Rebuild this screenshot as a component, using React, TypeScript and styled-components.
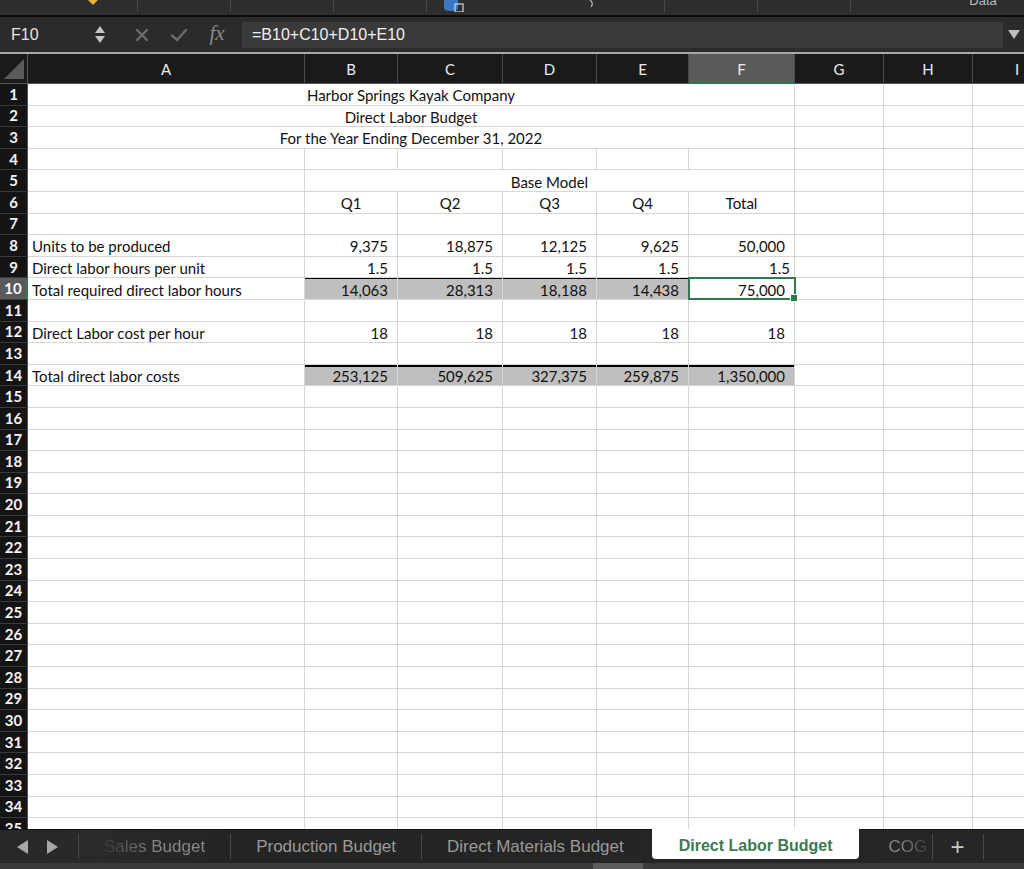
import React from 'react';
import styled, { createGlobalStyle, css } from 'styled-components';

const GlobalStyle = createGlobalStyle`
  html, body {
    margin: 0;
    padding: 0;
    background: #1e1e1e;
    overflow: hidden;
  }
  * {
    box-sizing: border-box;
  }
`;

const CELL_FONT = `Lato, "Open Sans", sans-serif`;
const UI_FONT = `"Liberation Sans", Arial, sans-serif`;
const GREEN = '#2f7a4a';

const COLUMNS = ['A', 'B', 'C', 'D', 'E', 'F', 'G', 'H', 'I', 'J'];
const WIDTHS = [277, 93, 105, 94, 92, 106, 89, 89, 89, 89];

type Align = 'left' | 'center' | 'right';

type Cell = {
  text?: string;
  align?: Align;
  span?: number;
  fill?: boolean;
  rule?: number;
  pad?: number;
  selected?: boolean;
};

const numbers = (values: string[], extra: Partial<Cell> = {}): Cell[] =>
  values.map((text) => ({ text, align: 'right', ...extra }));

const blankRest = (used: number): Cell[] =>
  Array.from({ length: COLUMNS.length - used }, () => ({}));

function buildRow(n: number): Cell[] {
  switch (n) {
    case 1:
      return [{ text: 'Harbor Springs Kayak Company', align: 'center', span: 6 }, ...blankRest(6)];
    case 2:
      return [{ text: 'Direct Labor Budget', align: 'center', span: 6 }, ...blankRest(6)];
    case 3:
      return [{ text: 'For the Year Ending December 31, 2022', align: 'center', span: 6 }, ...blankRest(6)];
    case 5:
      return [{}, { text: 'Base Model', align: 'center', span: 5 }, ...blankRest(6)];
    case 6:
      return [
        {},
        ...['Q1', 'Q2', 'Q3', 'Q4', 'Total'].map((text) => ({ text, align: 'center' as Align })),
        ...blankRest(6),
      ];
    case 8:
      return [
        { text: 'Units to be produced' },
        ...numbers(['9,375', '18,875', '12,125', '9,625', '50,000']),
        ...blankRest(6),
      ];
    case 9:
      return [
        { text: 'Direct labor hours per unit' },
        ...numbers(['1.5', '1.5', '1.5', '1.5']),
        { text: '1.5', align: 'right', pad: 4 },
        ...blankRest(6),
      ];
    case 10:
      return [
        { text: 'Total required direct labor hours' },
        ...numbers(['14,063', '28,313', '18,188', '14,438'], { fill: true, rule: 1 }),
        { text: '75,000', align: 'right', rule: 1, selected: true },
        ...blankRest(6),
      ];
    case 12:
      return [
        { text: 'Direct Labor cost per hour' },
        ...numbers(['18', '18', '18', '18', '18']),
        ...blankRest(6),
      ];
    case 14:
      return [
        { text: 'Total direct labor costs' },
        ...numbers(['253,125', '509,625', '327,375', '259,875', '1,350,000'], { fill: true, rule: 2 }),
        ...blankRest(6),
      ];
    default:
      return blankRest(0);
  }
}

const ROWS = Array.from({ length: 35 }, (_, i) => i + 1);

/* ---------- window chrome ---------- */

const Window = styled.div`
  width: 1024px;
  height: 869px;
  display: flex;
  flex-direction: column;
  background: #1e1e1e;
  overflow: hidden;
`;

const RibbonStrip = styled.div`
  height: 15px;
  flex-shrink: 0;
  background: #2e2e2e;
  display: flex;
  align-items: flex-start;
  overflow: hidden;
  border-bottom: 2px solid #0c0c0c;
  box-sizing: content-box;
`;

const RibbonGroup = styled.div<{ $w: number; $sep?: boolean }>`
  width: ${({ $w }) => $w}px;
  height: 12px;
  flex-shrink: 0;
  position: relative;
  display: flex;
  justify-content: center;
  border-right: ${({ $sep }) => ($sep ? '1px solid #4a4a4a' : 'none')};
`;

const RibbonLabel = styled.span`
  font-family: ${UI_FONT};
  font-size: 13px;
  color: #bdbdbd;
  margin-top: -7px;
  line-height: 16px;
`;

const FormulaBar = styled.div`
  height: 35px;
  flex-shrink: 0;
  background: #2b2b2b;
  display: flex;
  align-items: center;
  border-bottom: 2px solid #a8a8a8;
  box-sizing: content-box;
`;

const NameBox = styled.div`
  width: 124px;
  height: 100%;
  display: flex;
  align-items: center;
  justify-content: space-between;
  padding: 0 19px 0 11px;
  font-family: ${UI_FONT};
  font-size: 16px;
  color: #e4e4e4;
`;

const Stepper = styled.div`
  display: flex;
  flex-direction: column;
  gap: 3px;
`;

const ActionIcon = styled.span<{ $w: number }>`
  width: ${({ $w }) => $w}px;
  display: flex;
  justify-content: center;
  align-items: center;
`;

const FxMark = styled.span`
  width: 38px;
  text-align: center;
  font-family: "Liberation Serif", "DejaVu Serif", serif;
  font-style: italic;
  font-size: 21px;
  color: #8a8a8a;
  margin-top: -3px;
`;

const FormulaInput = styled.div`
  flex: 1;
  height: 26px;
  margin-left: 6px;
  background: #3a3a3a;
  display: flex;
  align-items: center;
  padding-left: 10px;
  font-family: ${UI_FONT};
  font-size: 16px;
  color: #f0f0f0;
`;

const Expander = styled.span`
  width: 21px;
  display: flex;
  justify-content: center;
`;

/* ---------- grid ---------- */

const SheetArea = styled.div`
  flex: 1;
  overflow: hidden;
  background: #ffffff;
`;

const Grid = styled.div`
  display: grid;
  grid-template-columns: 28px ${WIDTHS.map((w) => `${w}px`).join(' ')};
  grid-template-rows: 30px;
  grid-auto-rows: 21.6px;
  width: max-content;
`;

const Corner = styled.div`
  background: #1a1a1a;
  border-right: 1px solid #555;
  border-bottom: 1px solid #555;
  display: flex;
  align-items: flex-end;
  justify-content: flex-end;
  padding: 0 3px 4px 0;
`;

const ColumnHead = styled.div<{ $active?: boolean }>`
  background: ${({ $active }) => ($active ? '#5a5a5a' : '#1a1a1a')};
  border-right: 1px solid #4a4a4a;
  border-bottom: ${({ $active }) => ($active ? `2px solid ${GREEN}` : '1px solid #555')};
  color: #ececec;
  font-family: ${CELL_FONT};
  font-size: 15px;
  display: flex;
  align-items: center;
  justify-content: center;
  padding-top: 1px;
`;

const RowHead = styled.div<{ $active?: boolean }>`
  background: ${({ $active }) => ($active ? '#5a5a5a' : '#141414')};
  border-bottom: 1px solid #3a3a3a;
  border-right: ${({ $active }) => ($active ? `2px solid ${GREEN}` : '1px solid #555')};
  color: #f4f4f4;
  font-family: ${CELL_FONT};
  font-size: 15px;
  font-weight: 700;
  display: flex;
  align-items: center;
  justify-content: center;
  line-height: 1;
  overflow: hidden;
`;

const SheetCell = styled.div<{
  $align: Align;
  $span: number;
  $fill?: boolean;
  $rule?: number;
  $pad: number;
  $selected?: boolean;
}>`
  grid-column: span ${({ $span }) => $span};
  background: ${({ $fill }) => ($fill ? '#bfbfbf' : '#ffffff')};
  border-right: 1px solid #d6d6d6;
  border-bottom: 1px solid #d6d6d6;
  font-family: ${CELL_FONT};
  font-size: 15px;
  color: #111;
  white-space: nowrap;
  overflow: visible;
  display: flex;
  align-items: center;
  padding-top: 2px;
  justify-content: ${({ $align }) =>
    $align === 'right' ? 'flex-end' : $align === 'center' ? 'center' : 'flex-start'};
  padding-left: ${({ $align }) => ($align === 'left' ? 4 : 0)}px;
  padding-right: ${({ $align, $pad }) => ($align === 'right' ? $pad : 0)}px;
  ${({ $rule }) =>
    $rule &&
    css`
      box-shadow: inset 0 ${$rule}px 0 #000;
    `}
  ${({ $selected }) =>
    $selected &&
    css`
      position: relative;
      &::after {
        content: '';
        position: absolute;
        top: -1px;
        left: -1px;
        right: -2px;
        bottom: -1px;
        border: 2px solid ${GREEN};
        z-index: 2;
      }
      &::before {
        content: '';
        position: absolute;
        right: -4px;
        bottom: -3px;
        width: 6px;
        height: 6px;
        background: ${GREEN};
        border: 1px solid #fff;
        z-index: 3;
      }
    `}
`;

/* ---------- sheet tabs ---------- */

const TabBar = styled.div`
  height: 34px;
  flex-shrink: 0;
  background: linear-gradient(90deg, #282828 0%, #2a2a2a 10%, #242424 22%, #262626 100%);
  border-top: 1px solid #111;
  display: flex;
  align-items: flex-start;
`;

const TabArrows = styled.div`
  width: 79px;
  height: 25px;
  margin-top: 4px;
  border-right: 1px solid #4a4a4a;
  display: flex;
  align-items: center;
  justify-content: center;
  gap: 19px;
  padding-right: 4px;
`;

const Tab = styled.div<{ $active?: boolean; $edge?: boolean }>`
  height: ${({ $active }) => ($active ? 30 : 25)}px;
  margin-top: ${({ $active }) => ($active ? 0 : 4)}px;
  padding: 0 ${({ $edge }) => ($edge ? '28px 0 25px' : '25px')};
  display: flex;
  align-items: center;
  font-family: ${UI_FONT};
  font-size: 17px;
  white-space: nowrap;
  color: #9a9a9a;
  border-right: ${({ $active, $edge }) => ($active || $edge ? 'none' : '1px solid #4a4a4a')};
  ${({ $active }) =>
    $active &&
    css`
      background: #ffffff;
      color: #3d7a50;
      font-size: 16px;
      font-weight: 700;
      border-radius: 0 0 4px 4px;
      margin-top: -1px;
      padding: 3px 26px 0 27px;
    `}
`;

const OverflowTab = styled.div`
  width: 74px;
  height: 25px;
  margin-top: 4px;
  padding-left: 30px;
  border-right: 1px solid #4a4a4a;
  display: flex;
  align-items: center;
  overflow: hidden;
  font-family: ${UI_FONT};
  font-size: 17px;
  white-space: nowrap;
`;

const FadedText = styled.span<{ $dir: 'left' | 'right' }>`
  background: linear-gradient(
    90deg,
    ${({ $dir }) => ($dir === 'left' ? '#3a3a3a, #8a8a8a 55%' : '#8a8a8a 30%, #3e3e3e')}
  );
  -webkit-background-clip: text;
  background-clip: text;
  color: transparent;
`;

const PlusTab = styled.div`
  width: 51px;
  height: 25px;
  margin-top: 4px;
  border-right: 1px solid #4a4a4a;
  display: flex;
  align-items: center;
  justify-content: center;
  font-family: ${UI_FONT};
  font-size: 24px;
  color: #c8c8c8;
`;

const ScrollStrip = styled.div`
  height: 6px;
  flex-shrink: 0;
  background: #3a3a3a;
  padding-left: 593px;
`;

const ScrollThumb = styled.div`
  width: 50px;
  height: 100%;
  background: #5c5c5c;
`;

function Triangle({ dir, color }: { dir: 'left' | 'right'; color: string }) {
  return (
    <svg width="11" height="14" viewBox="0 0 11 14">
      <path d={dir === 'left' ? 'M11 0 L0 7 L11 14 Z' : 'M0 0 L11 7 L0 14 Z'} fill={color} />
    </svg>
  );
}

function App() {
  return (
    <>
      <GlobalStyle />
      <Window>
        <RibbonStrip>
          <RibbonGroup $w={86} />
          <RibbonGroup $w={52} $sep>
            <svg width="10" height="6" viewBox="0 0 10 6" style={{ marginLeft: -38 }}>
              <path d="M0 0 L5 5 L10 0 Z" fill="#e8b33a" />
            </svg>
          </RibbonGroup>
          <RibbonGroup $w={93} $sep />
          <RibbonGroup $w={103} $sep />
          <RibbonGroup $w={93} $sep />
          <RibbonGroup $w={238} $sep>
            <svg width="22" height="12" viewBox="0 0 22 12" style={{ marginLeft: -186 }}>
              <path d="M2 0 V8 Q2 11 9 11 Q16 11 16 8 V0" fill="#3b78c4" />
              <rect x="13" y="4" width="8" height="8" fill="none" stroke="#d8d8d8" strokeWidth="1.2" />
            </svg>
            <svg width="6" height="8" viewBox="0 0 6 8" style={{ position: 'absolute', left: 162, top: 0 }}>
              <path d="M1 0 Q5 3 2 7" fill="none" stroke="#bbb" strokeWidth="1.2" />
            </svg>
          </RibbonGroup>
          <RibbonGroup $w={93} $sep />
          <RibbonGroup $w={93} $sep />
          <RibbonGroup $w={112} />
          <RibbonGroup $w={40}>
            <RibbonLabel>Data</RibbonLabel>
          </RibbonGroup>
        </RibbonStrip>

        <FormulaBar>
          <NameBox>
            <span>F10</span>
            <Stepper>
              <svg width="10" height="7" viewBox="0 0 10 7">
                <path d="M5 0 L10 7 L0 7 Z" fill="#c4c4c4" />
              </svg>
              <svg width="10" height="7" viewBox="0 0 10 7">
                <path d="M0 0 L10 0 L5 7 Z" fill="#c4c4c4" />
              </svg>
            </Stepper>
          </NameBox>
          <ActionIcon $w={36}>
            <svg width="14" height="14" viewBox="0 0 14 14">
              <path d="M2 2 L12 12 M12 2 L2 12" stroke="#6c6c6c" strokeWidth="2.4" strokeLinecap="round" />
            </svg>
          </ActionIcon>
          <ActionIcon $w={38}>
            <svg width="18" height="14" viewBox="0 0 18 14">
              <path d="M2 7.5 L7 12 L16 2" fill="none" stroke="#6c6c6c" strokeWidth="2.4" strokeLinecap="round" />
            </svg>
          </ActionIcon>
          <FxMark>fx</FxMark>
          <FormulaInput>=B10+C10+D10+E10</FormulaInput>
          <Expander>
            <svg width="12" height="9" viewBox="0 0 12 9">
              <path d="M0 0 L12 0 L6 9 Z" fill="#bdbdbd" />
            </svg>
          </Expander>
        </FormulaBar>

        <SheetArea>
          <Grid>
            <Corner>
              <svg width="20" height="20" viewBox="0 0 20 20">
                <path d="M20 0 L20 20 L0 20 Z" fill="#5a5a5a" />
              </svg>
            </Corner>
            {COLUMNS.map((c) => (
              <ColumnHead key={c} $active={c === 'F'}>
                {c === 'J' ? '' : c}
              </ColumnHead>
            ))}
            {ROWS.map((r) => (
              <React.Fragment key={r}>
                <RowHead $active={r === 10}>{r}</RowHead>
                {buildRow(r).map((cell, i) => (
                  <SheetCell
                    key={i}
                    $align={cell.align ?? 'left'}
                    $span={cell.span ?? 1}
                    $fill={cell.fill}
                    $rule={cell.rule}
                    $pad={cell.pad ?? 9}
                    $selected={cell.selected}
                  >
                    {cell.text}
                  </SheetCell>
                ))}
              </React.Fragment>
            ))}
          </Grid>
        </SheetArea>

        <TabBar>
          <TabArrows>
            <Triangle dir="left" color="#a8a8a8" />
            <Triangle dir="right" color="#a8a8a8" />
          </TabArrows>
          <Tab>
            <FadedText $dir="left">Sales Budget</FadedText>
          </Tab>
          <Tab>Production Budget</Tab>
          <Tab $edge>Direct Materials Budget</Tab>
          <Tab $active>Direct Labor Budget</Tab>
          <OverflowTab>
            <FadedText $dir="right">COG</FadedText>
          </OverflowTab>
          <PlusTab>+</PlusTab>
        </TabBar>
        <ScrollStrip>
          <ScrollThumb />
        </ScrollStrip>
      </Window>
    </>
  );
}

export default App;
